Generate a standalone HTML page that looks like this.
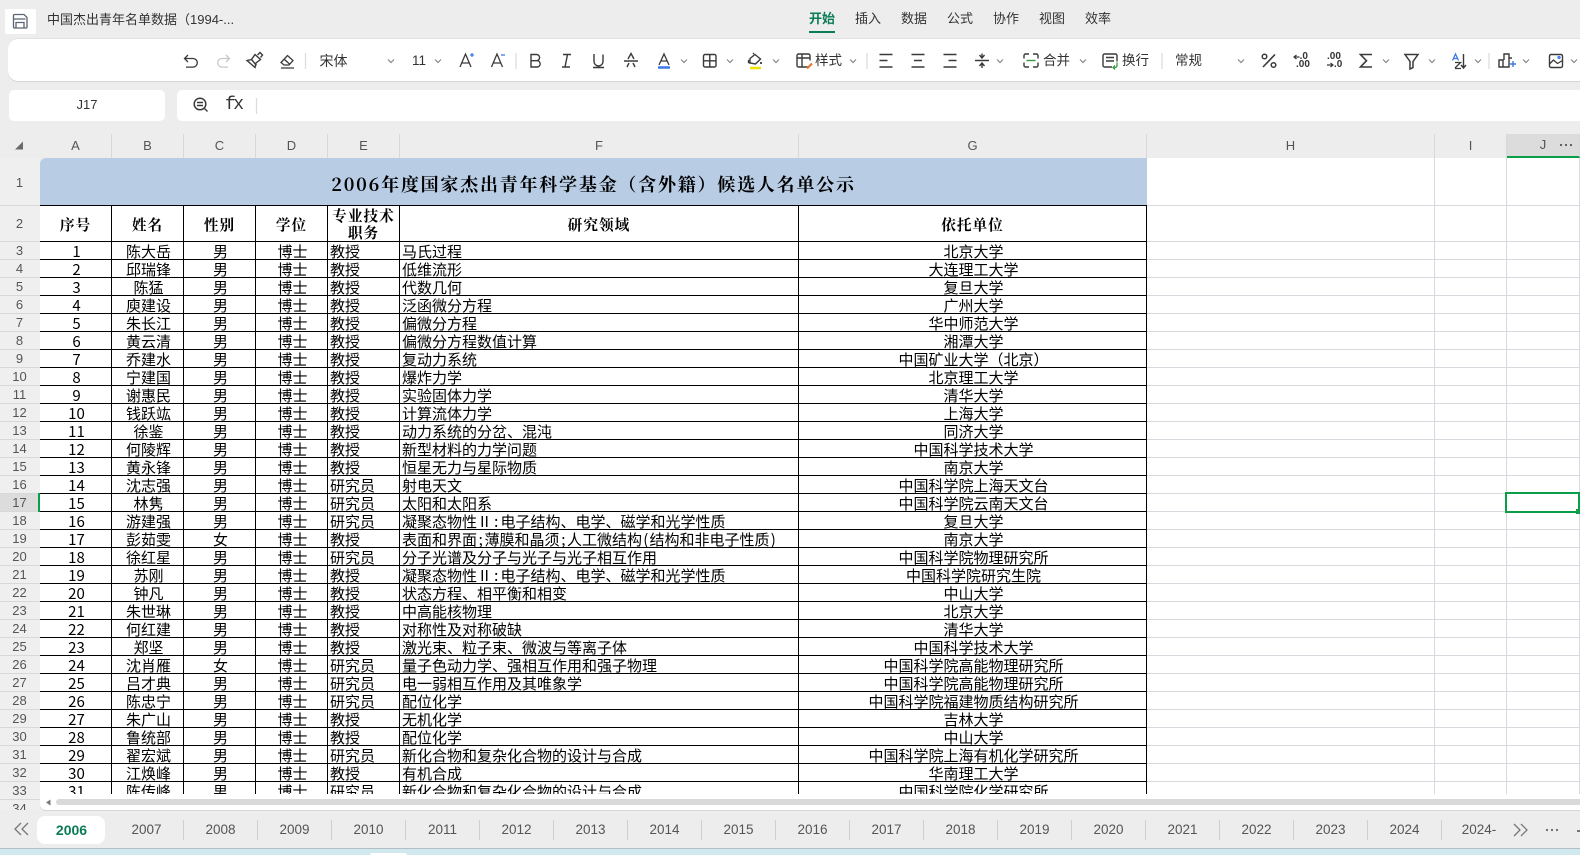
<!DOCTYPE html>
<html lang="zh-CN"><head><meta charset="utf-8"><title>中国杰出青年名单数据</title>
<style>
*{box-sizing:border-box}
html,body{margin:0;padding:0;width:1580px;height:855px;overflow:hidden;background:#ededed}
body{position:relative;font-family:"Liberation Sans","Noto Sans CJK SC",sans-serif;color:#333}
.a{position:absolute;white-space:nowrap}
.ui{font-size:13px;line-height:18px;color:#333}
.tb{font-size:14px;line-height:18px;color:#333;top:52px}
.m{top:10px;font-size:13px;line-height:18px;color:#333}
.ch{position:absolute;top:134px;height:24px;border-right:1px solid #d8d8d8;font-size:13px;line-height:24px;text-align:center;color:#555;background:#ededed}
.rh{position:absolute;left:0;width:40px;border-bottom:1px solid #d8d8d8;font-size:13px;text-align:center;color:#555;background:#efefef;padding-right:1px}
#sheet{position:absolute;left:40px;top:158px;width:1540px;height:636px;background:#fff;overflow:hidden;border-top-left-radius:6px}
#sheet table{position:absolute;left:0;top:0;width:1107px;table-layout:fixed;border-collapse:separate;border-spacing:0;font-family:"WenQuanYi Zen Hei","Noto Sans CJK SC",sans-serif;font-size:15px;color:#000}
td{height:18px;padding:2px 0 0 2px;border-right:1px solid #000;border-bottom:1px solid #000;white-space:nowrap;overflow:hidden;vertical-align:top;line-height:15px;text-align:center}
td:nth-child(5),td:nth-child(6){text-align:left}
tr.t td{height:48px;background:#b8cce4;border-right:0;font-family:"Noto Serif CJK SC",serif;font-weight:700;font-size:18px;letter-spacing:1.780px;vertical-align:top;padding:5px 0 0;line-height:42px}
tr.h td{height:36px;font-weight:700;font-family:"Noto Serif CJK SC",serif;font-size:14.670px;letter-spacing:1px;vertical-align:top;text-align:center;padding:3px 0 0;line-height:32px}
tr.h td.w{line-height:16.500px;padding-top:2px}
.p{display:inline-block;width:7.500px;text-align:center}
.r{display:inline-block;width:15px;text-align:center}
.c{display:inline-block;width:8.500px;text-align:center}
.gl{position:absolute;background:#d8d8de}
#tabs{position:absolute;left:110px;top:820px;display:flex}
#tabs div{width:74px;height:20px;border-right:1px solid #d0d0d0;text-align:center;font-size:13.500px;line-height:20px;color:#555}
#tabs div:last-child{border:0}
</style></head><body>

<div class="a" style="left:5px;top:9px;width:31px;height:25px;background:#fff;border-radius:2px"></div>
<div class="a ui" style="left:47px;top:11px">中国杰出青年名单数据（1994-...</div>

<div class="a m" style="left:809px;color:#0b7d55;font-weight:700">开始</div>
<div class="a" style="left:809px;top:31px;width:26px;height:2px;background:#0b7d55"></div>
<div class="a m" style="left:855px">插入</div>
<div class="a m" style="left:901px">数据</div>
<div class="a m" style="left:947px">公式</div>
<div class="a m" style="left:993px">协作</div>
<div class="a m" style="left:1039px">视图</div>
<div class="a m" style="left:1085px">效率</div>

<div class="a" style="left:8px;top:39px;width:1590px;height:42px;background:#fff;border-radius:10px;box-shadow:0 1px 0 #d4d4d4,0 -1px 0 #e2e2e2"></div>
<div class="a" style="left:9px;top:90px;width:156px;height:31px;background:#fff;border-radius:5px"></div>
<div class="a" style="left:177px;top:90px;width:1420px;height:31px;background:#fff;border-radius:5px"></div>
<div class="a ui" style="left:76.500px;top:96px">J17</div>

<svg class="a" style="left:0;top:0" width="1580" height="130" viewBox="0 0 1580 130" fill="none" stroke="#3a3a3a" stroke-width="1.300">
<!-- save -->
<path d="M14.500 14.500h9.500l3 3v9.500a1 1 0 0 1-1 1h-11.500a1 1 0 0 1-1-1v-11.500a1 1 0 0 1 1-1zM16 28v-5.500h8v5.500M13.500 19h12" stroke="#5a6472"/>
<!-- undo / redo -->
<path d="M188 55l-3.500 3.500 3.500 3.500M185 58.500h8a4.300 4.300 0 0 1 0 8.600h-7"/>
<path d="M226 55l3.500 3.500-3.500 3.500M229 58.500h-7a4.300 4.300 0 0 0 0 8.600h6" stroke="#c8c8c8"/>
<!-- brush -->
<path d="M247 60.500l4.500-1 3.500-5 5.500 5-4.500 3.500-1 4.500zM251.500 59.500l5 6M257.500 55l2.500-2.500 2.500 2.500-2 2.500" stroke-width="1.400"/>
<!-- eraser -->
<path d="M281 62.500l6.500-7 5.500 5-4 4.500h-5zM284 59l5.500 5M281 68h13"/>
<path d="M305.500 53v16" stroke="#ddd"/>
<!-- chevrons -->
<g stroke="#888" stroke-width="1.200">
<path d="M388 59.500l3 3 3-3M435 59.500l3 3 3-3M681 59.500l3 3 3-3M727 59.500l3 3 3-3M773 59.500l3 3 3-3M850 59.500l3 3 3-3M997 59.500l3 3 3-3M1080 59.500l3 3 3-3M1238 59.500l3 3 3-3M1383 59.500l3 3 3-3M1429 59.500l3 3 3-3M1475 59.500l3 3 3-3M1523 59.500l3 3 3-3M1571 59.500l3 3 3-3"/>
</g>
<!-- A+ A- -->
<path d="M460 67l5.500-13 5.500 13M462 63h7"/><path d="M470 55h4M472 53v4" stroke="#3b78e7"/>
<path d="M491.500 67l5.500-13 5.500 13M493.500 63h7"/><path d="M501 55h4" stroke="#3b78e7"/>
<path d="M516 53v16" stroke="#ddd"/>
<!-- B I U S -->
<path d="M531 54.500h5.500a3 3 0 0 1 0 6.200h-5.500zM531 60.700h6.500a3.200 3.200 0 0 1 0 6.300h-6.500z" stroke-width="1.400"/>
<path d="M563 54.500h8M562 67h8M567.500 54.500l-2.500 12.500" stroke-width="1.400"/>
<path d="M594 54v7.500a4.500 4.500 0 0 0 9 0v-7M593 67.500h11" stroke-width="1.400"/>
<path d="M624 61h14M628 59l3-5.500 3 5.500M627 67l2-4M635 67l-2-4" stroke-width="1.400"/>
<!-- font colour -->
<path d="M659 65l5-11 5 11M661 61h6"/><path d="M658 67.500h12" stroke="#3b78e7" stroke-width="2.500"/>
<!-- borders -->
<rect x="703.500" y="54.500" width="12.500" height="12.500" rx="1.500" stroke-width="1.400"/><path d="M709.800 54.500v12.500M703.500 60.800h12.500" stroke-width="1.400"/>
<!-- fill -->
<path d="M750 58.500l5-4 5.500 4.500-5 5-5.500-1zM754 54l-1-1M749 60c-1 1-1 3 1 3" stroke-width="1.400"/><path d="M761 62v2" stroke-width="1.800"/><path d="M750 68h11" stroke="#f2e200" stroke-width="2.500"/>
<!-- style -->
<path d="M808 67h-9.500a1.500 1.500 0 0 1-1.500-1.500v-10a1.500 1.500 0 0 1 1.500-1.500h10a1.500 1.500 0 0 1 1.500 1.500v5M797 58h13M802 54v13" stroke-width="1.400"/><path d="M807 68.500l5-5" stroke="#e8772e" stroke-width="2.200"/>
<path d="M867 53v16" stroke="#ddd"/>
<!-- align -->
<path d="M879.500 54.500h13M879.500 60.500h8M879.500 67h13M911.500 54.500h13M914 60.500h8M911.500 67h13M943.500 54.500h13M948.500 60.500h8M943.500 67h13" stroke-width="1.400"/>
<!-- vertical -->
<path d="M975 60.500h14M982 53.500v3.500M982 64v4M979.500 55l2.500 3 2.500-3M979.500 66l2.500-3 2.500 3" stroke-width="1.400"/>
<!-- merge -->
<path d="M1029 54h-3.500a1.500 1.500 0 0 0-1.500 1.500v3M1033 54h3.500a1.500 1.500 0 0 1 1.500 1.500v3M1029 67h-3.500a1.500 1.500 0 0 1-1.500-1.500v-3M1033 67h3.500a1.500 1.500 0 0 0 1.500-1.500v-3" stroke-width="1.400"/><path d="M1026.500 60.500h9" stroke="#3b9a3f" stroke-width="1.400"/>
<!-- wrap -->
<path d="M1112 67h-7.500a1.500 1.500 0 0 1-1.500-1.500v-10a1.500 1.500 0 0 1 1.500-1.500h11a1.500 1.500 0 0 1 1.500 1.500v6M1106 57.500h8M1106 61h8" stroke-width="1.400"/><path d="M1117 62.500v3a2 2 0 0 1-2 2h-2M1115 65.500l-2 2 2 2" stroke="#3b9a3f" stroke-width="1.300"/>
<path d="M1162 53v16" stroke="#ddd"/>
<!-- percent -->
<path d="M1275 54.500l-12 12.500" stroke-width="1.600"/><circle cx="1264.500" cy="56.500" r="2.300" stroke-width="1.500"/><circle cx="1273.500" cy="65" r="2.300" stroke-width="1.500"/>
<!-- decimals -->
<path d="M1294 57h5.500M1296.500 55l-2.500 2 2.500 2M1327 65h6M1330.500 63l2.500 2-2.500 2" stroke-width="1.200"/>
<!-- sigma -->
<path d="M1372 54.500h-11.500l6 6.200-6 6.300h11.500" stroke-width="1.600"/>
<!-- filter -->
<path d="M1405 54.500h13l-5 7v6l-3 1.500v-7.500z" stroke-width="1.500"/>
<!-- sort -->
<path d="M1455 68.500h6M1455 62.500h5.500l-5.500 5.500" stroke-width="1.300"/><path d="M1452.500 60.500l3-6.500 3 6.500M1453.500 58.500h4" stroke="#3b78e7" stroke-width="1.300"/><path d="M1463.500 54v13.500M1461 65l2.500 3 2.500-3" stroke-width="1.400"/>
<path d="M1489 53v16" stroke="#ddd"/>
<!-- chart -->
<path d="M1503 67v-7h-4v7h10v-13h-5v6M1509 58h3" stroke-width="1.400"/><path d="M1513 61v6M1510 64h6" stroke="#3b78e7" stroke-width="1.400"/>
<!-- image -->
<rect x="1549.500" y="54.500" width="13" height="13" rx="1.500" stroke-width="1.400"/><path d="M1549.500 64l4-4 4 3.500 5-3" stroke-width="1.300"/><circle cx="1559" cy="57.500" r="1" stroke="#3b78e7"/>
<!-- formula -->
<circle cx="200" cy="104" r="5.800" stroke-width="1.500"/><path d="M197 102.500h6M197 105.500h6M204.500 108.500l3 3" stroke-width="1.400"/>
<path d="M256.500 98v16" stroke="#ddd"/>
</svg>

<div class="a" style="left:225px;top:95px;font:400 18px/20px 'Liberation Mono',monospace;color:#333;letter-spacing:-2.500px">fx</div>

<div class="a tb" style="left:319.500px;font-family:'WenQuanYi Zen Hei','Noto Sans CJK SC',sans-serif">宋体</div>
<div class="a tb" style="left:412px;font-size:13.500px">11</div>
<div class="a tb" style="left:815px;font-size:13.500px">样式</div>
<div class="a tb" style="left:1043px;font-size:13.500px">合并</div>
<div class="a tb" style="left:1122px;font-size:13.500px">换行</div>
<div class="a tb" style="left:1175px;font-size:13.500px">常规</div>
<div class="a" style="left:1297px;top:52px;font-size:10px;line-height:10px;font-weight:700;color:#333;text-align:right;width:11px">.0</div>
<div class="a" style="left:1296px;top:60px;font-size:10px;line-height:10px;font-weight:700;color:#333">.00</div>
<div class="a" style="left:1327px;top:52px;font-size:10px;line-height:10px;font-weight:700;color:#333">.00</div>
<div class="a" style="left:1334px;top:60px;font-size:10px;line-height:10px;font-weight:700;color:#333">.0</div>

<!-- column headers -->
<svg class="a" style="left:14px;top:140px" width="11" height="11"><path d="M1 9.500L9 1.500V9.500z" fill="#6a6a6a"/></svg>
<div class="ch" style="left:40px;width:72px">A</div>
<div class="ch" style="left:112px;width:72px">B</div>
<div class="ch" style="left:184px;width:72px">C</div>
<div class="ch" style="left:256px;width:72px">D</div>
<div class="ch" style="left:328px;width:72px">E</div>
<div class="ch" style="left:400px;width:399px">F</div>
<div class="ch" style="left:799px;width:348px">G</div>
<div class="ch" style="left:1147px;width:288px">H</div>
<div class="ch" style="left:1435px;width:72px">I</div>
<div class="ch" style="left:1507px;width:73px;background:#dcdcdc;border-bottom:2px solid #0a9e48;line-height:22px">J</div>
<svg class="a" style="left:1558px;top:141px" width="18" height="8" fill="#555"><circle cx="3" cy="4" r="1.100"/><circle cx="8" cy="4" r="1.100"/><circle cx="13" cy="4" r="1.100"/></svg>

<!-- row headers -->
<div class="rh" style="top:158px;height:48px;line-height:50px">1</div>
<div class="rh" style="top:206px;height:36px;line-height:36px">2</div>
<div class="rh" style="top:242px;height:18px;line-height:17px">3</div>
<div class="rh" style="top:260px;height:18px;line-height:17px">4</div>
<div class="rh" style="top:278px;height:18px;line-height:17px">5</div>
<div class="rh" style="top:296px;height:18px;line-height:17px">6</div>
<div class="rh" style="top:314px;height:18px;line-height:17px">7</div>
<div class="rh" style="top:332px;height:18px;line-height:17px">8</div>
<div class="rh" style="top:350px;height:18px;line-height:17px">9</div>
<div class="rh" style="top:368px;height:18px;line-height:17px">10</div>
<div class="rh" style="top:386px;height:18px;line-height:17px">11</div>
<div class="rh" style="top:404px;height:18px;line-height:17px">12</div>
<div class="rh" style="top:422px;height:18px;line-height:17px">13</div>
<div class="rh" style="top:440px;height:18px;line-height:17px">14</div>
<div class="rh" style="top:458px;height:18px;line-height:17px">15</div>
<div class="rh" style="top:476px;height:18px;line-height:17px">16</div>
<div class="rh" style="top:494px;height:18px;line-height:17px;background:#dcdcdc">17</div>
<div class="rh" style="top:512px;height:18px;line-height:17px">18</div>
<div class="rh" style="top:530px;height:18px;line-height:17px">19</div>
<div class="rh" style="top:548px;height:18px;line-height:17px">20</div>
<div class="rh" style="top:566px;height:18px;line-height:17px">21</div>
<div class="rh" style="top:584px;height:18px;line-height:17px">22</div>
<div class="rh" style="top:602px;height:18px;line-height:17px">23</div>
<div class="rh" style="top:620px;height:18px;line-height:17px">24</div>
<div class="rh" style="top:638px;height:18px;line-height:17px">25</div>
<div class="rh" style="top:656px;height:18px;line-height:17px">26</div>
<div class="rh" style="top:674px;height:18px;line-height:17px">27</div>
<div class="rh" style="top:692px;height:18px;line-height:17px">28</div>
<div class="rh" style="top:710px;height:18px;line-height:17px">29</div>
<div class="rh" style="top:728px;height:18px;line-height:17px">30</div>
<div class="rh" style="top:746px;height:18px;line-height:17px">31</div>
<div class="rh" style="top:764px;height:18px;line-height:17px">32</div>
<div class="rh" style="top:782px;height:18px;line-height:17px">33</div>
<div class="rh" style="top:800px;height:10px;line-height:17px;border:0;overflow:hidden">34</div>
<div class="a" style="left:38px;top:493px;width:3px;height:19px;background:#0a9e48"></div>

<!-- white strip beneath cells -->
<div class="a" style="left:40px;top:790px;width:1540px;height:20px;background:#fff;border-bottom-left-radius:6px;box-shadow:0 1px 0 #d8d8d8"></div>

<div id="sheet">
<div class="gl" style="left:1107px;top:47px;width:433px;height:1px"></div>
<div class="gl" style="left:1107px;top:83px;width:433px;height:1px"></div>
<div style="position:absolute;left:1107px;top:84px;width:433px;height:552px;background:repeating-linear-gradient(to bottom,transparent 0,transparent 17px,#d8d8de 17px,#d8d8de 18px)"></div>
<div class="gl" style="left:1394px;top:0;width:1px;height:636px"></div>
<div class="gl" style="left:1466px;top:0;width:1px;height:636px"></div>
<div class="gl" style="left:1539px;top:0;width:1px;height:636px"></div>
<div style="position:absolute;left:1465px;top:334px;width:75px;height:21px;border:2px solid #0a9e48"></div>
<div style="position:absolute;left:1536px;top:351px;width:4px;height:5px;background:#0a9e48"></div>
<table>
<colgroup><col style="width:72px"><col style="width:72px"><col style="width:72px"><col style="width:72px"><col style="width:72px"><col style="width:399px"><col style="width:348px"></colgroup>
<tr class="t"><td colspan="7">2006年度国家杰出青年科学基金（含外籍）候选人名单公示</td></tr>
<tr class="h"><td>序号</td><td>姓名</td><td>性别</td><td>学位</td><td class="w">专业技术<br>职务</td><td>研究领域</td><td>依托单位</td></tr>
<tr><td>1</td><td>陈大岳</td><td>男</td><td>博士</td><td>教授</td><td>马氏过程</td><td>北京大学</td></tr>
<tr><td>2</td><td>邱瑞锋</td><td>男</td><td>博士</td><td>教授</td><td>低维流形</td><td>大连理工大学</td></tr>
<tr><td>3</td><td>陈猛</td><td>男</td><td>博士</td><td>教授</td><td>代数几何</td><td>复旦大学</td></tr>
<tr><td>4</td><td>庾建设</td><td>男</td><td>博士</td><td>教授</td><td>泛函微分方程</td><td>广州大学</td></tr>
<tr><td>5</td><td>朱长江</td><td>男</td><td>博士</td><td>教授</td><td>偏微分方程</td><td>华中师范大学</td></tr>
<tr><td>6</td><td>黄云清</td><td>男</td><td>博士</td><td>教授</td><td>偏微分方程数值计算</td><td>湘潭大学</td></tr>
<tr><td>7</td><td>乔建水</td><td>男</td><td>博士</td><td>教授</td><td>复动力系统</td><td>中国矿业大学（北京）</td></tr>
<tr><td>8</td><td>宁建国</td><td>男</td><td>博士</td><td>教授</td><td>爆炸力学</td><td>北京理工大学</td></tr>
<tr><td>9</td><td>谢惠民</td><td>男</td><td>博士</td><td>教授</td><td>实验固体力学</td><td>清华大学</td></tr>
<tr><td>10</td><td>钱跃竑</td><td>男</td><td>博士</td><td>教授</td><td>计算流体力学</td><td>上海大学</td></tr>
<tr><td>11</td><td>徐鉴</td><td>男</td><td>博士</td><td>教授</td><td>动力系统的分岔、混沌</td><td>同济大学</td></tr>
<tr><td>12</td><td>何陵辉</td><td>男</td><td>博士</td><td>教授</td><td>新型材料的力学问题</td><td>中国科学技术大学</td></tr>
<tr><td>13</td><td>黄永锋</td><td>男</td><td>博士</td><td>教授</td><td>恒星无力与星际物质</td><td>南京大学</td></tr>
<tr><td>14</td><td>沈志强</td><td>男</td><td>博士</td><td>研究员</td><td>射电天文</td><td>中国科学院上海天文台</td></tr>
<tr><td>15</td><td>林隽</td><td>男</td><td>博士</td><td>研究员</td><td>太阳和太阳系</td><td>中国科学院云南天文台</td></tr>
<tr><td>16</td><td>游建强</td><td>男</td><td>博士</td><td>研究员</td><td>凝聚态物性<span class="r">Ⅱ</span><span class="c">:</span>电子结构、电学、磁学和光学性质</td><td>复旦大学</td></tr>
<tr><td>17</td><td>彭茹雯</td><td>女</td><td>博士</td><td>教授</td><td>表面和界面<span class="p">;</span>薄膜和晶须<span class="p">;</span>人工微结构<span class="p">(</span>结构和非电子性质<span class="p">)</span></td><td>南京大学</td></tr>
<tr><td>18</td><td>徐红星</td><td>男</td><td>博士</td><td>研究员</td><td>分子光谱及分子与光子与光子相互作用</td><td>中国科学院物理研究所</td></tr>
<tr><td>19</td><td>苏刚</td><td>男</td><td>博士</td><td>教授</td><td>凝聚态物性<span class="r">Ⅱ</span><span class="c">:</span>电子结构、电学、磁学和光学性质</td><td>中国科学院研究生院</td></tr>
<tr><td>20</td><td>钟凡</td><td>男</td><td>博士</td><td>教授</td><td>状态方程、相平衡和相变</td><td>中山大学</td></tr>
<tr><td>21</td><td>朱世琳</td><td>男</td><td>博士</td><td>教授</td><td>中高能核物理</td><td>北京大学</td></tr>
<tr><td>22</td><td>何红建</td><td>男</td><td>博士</td><td>教授</td><td>对称性及对称破缺</td><td>清华大学</td></tr>
<tr><td>23</td><td>郑坚</td><td>男</td><td>博士</td><td>教授</td><td>激光束、粒子束、微波与等离子体</td><td>中国科学技术大学</td></tr>
<tr><td>24</td><td>沈肖雁</td><td>女</td><td>博士</td><td>研究员</td><td>量子色动力学、强相互作用和强子物理</td><td>中国科学院高能物理研究所</td></tr>
<tr><td>25</td><td>吕才典</td><td>男</td><td>博士</td><td>研究员</td><td>电一弱相互作用及其唯象学</td><td>中国科学院高能物理研究所</td></tr>
<tr><td>26</td><td>陈忠宁</td><td>男</td><td>博士</td><td>研究员</td><td>配位化学</td><td>中国科学院福建物质结构研究所</td></tr>
<tr><td>27</td><td>朱广山</td><td>男</td><td>博士</td><td>教授</td><td>无机化学</td><td>吉林大学</td></tr>
<tr><td>28</td><td>鲁统部</td><td>男</td><td>博士</td><td>教授</td><td>配位化学</td><td>中山大学</td></tr>
<tr><td>29</td><td>翟宏斌</td><td>男</td><td>博士</td><td>研究员</td><td>新化合物和复杂化合物的设计与合成</td><td>中国科学院上海有机化学研究所</td></tr>
<tr><td>30</td><td>江焕峰</td><td>男</td><td>博士</td><td>教授</td><td>有机合成</td><td>华南理工大学</td></tr>
<tr><td>31</td><td>陈传峰</td><td>男</td><td>博士</td><td>研究员</td><td>新化合物和复杂化合物的设计与合成</td><td>中国科学院化学研究所</td></tr>
</table>
</div>

<!-- scrollbar -->
<svg class="a" style="left:44px;top:798px" width="10" height="9"><path d="M6.500 1.500L2 4.500l4.500 3z" fill="#777"/></svg>
<div class="a" style="left:56px;top:799px;width:1530px;height:6px;background:#d9d9d9;border-radius:3px"></div>

<!-- tabs -->
<svg class="a" style="left:13px;top:821px" width="18" height="16" fill="none" stroke="#777" stroke-width="1.300"><path d="M8 2L2 8l6 6M15 2L9 8l6 6"/></svg>
<div class="a" style="left:37px;top:816px;width:68px;height:28px;background:#fff;border-radius:8px;text-align:center;font-size:14px;line-height:28px;font-weight:700;color:#0b7d55;padding-left:1px">2006</div>
<div id="tabs"><div>2007</div><div>2008</div><div>2009</div><div>2010</div><div>2011</div><div>2012</div><div>2013</div><div>2014</div><div>2015</div><div>2016</div><div>2017</div><div>2018</div><div>2019</div><div>2020</div><div>2021</div><div>2022</div><div>2023</div><div>2024</div><div>2024-</div></div>
<svg class="a" style="left:1513px;top:822px" width="16" height="16" fill="none" stroke="#777" stroke-width="1.300"><path d="M1 2l6 6-6 6M8 2l6 6-6 6"/></svg>
<svg class="a" style="left:1544px;top:826px" width="18" height="8" fill="#666"><circle cx="3" cy="4" r="1.100"/><circle cx="8" cy="4" r="1.100"/><circle cx="13" cy="4" r="1.100"/></svg>
<div class="a" style="left:1577px;top:830px;width:3px;height:1.500px;background:#777"></div>

<!-- bottom strip -->
<div class="a" style="left:0;top:848px;width:1580px;height:7px;background:#cfe9ef;border-top:1px solid #b2bec3"></div>
<div class="a" style="left:370px;top:853px;width:37px;height:2px;background:#fff;border-radius:2px 2px 0 0"></div>
</body></html>
